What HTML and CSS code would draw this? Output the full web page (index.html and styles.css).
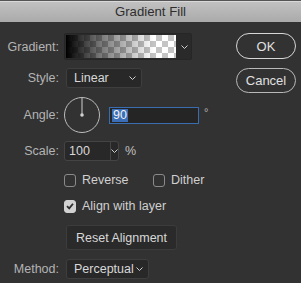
FILE: index.html
```html
<!DOCTYPE html>
<html lang="en">
<head>
    <meta charset="UTF-8">
    <title>Gradient Fill</title>
    <link rel="stylesheet" href="styles.css">
</head>
<body>
    <div class="dialog">
        <div class="titlebar">Gradient Fill</div>

        <div class="content">
            <!-- Left: fill options -->
            <div class="form">
                <div class="row row-gradient">
                    <span class="label">Gradient:</span>
                    <div class="swatch">
                        <div class="swatch-preview"></div>
                        <div class="swatch-arrow">
                            <svg width="7" height="4" viewBox="0 0 7 4"><polyline points="0.5,0.5 3.5,3.5 6.5,0.5" fill="none" stroke="#cfcfcf" stroke-width="1"/></svg>
                        </div>
                    </div>
                </div>

                <div class="row row-style">
                    <span class="label">Style:</span>
                    <div class="select select-style">
                        <span>Linear</span>
                        <svg width="7" height="4" viewBox="0 0 7 4"><polyline points="0.5,0.5 3.5,3.5 6.5,0.5" fill="none" stroke="#cfcfcf" stroke-width="1"/></svg>
                    </div>
                </div>

                <div class="row row-angle">
                    <span class="label">Angle:</span>
                    <div class="angle-group">
                        <svg class="dial" width="36" height="36" viewBox="0 0 36 36">
                            <circle cx="18" cy="18" r="17.5" fill="none" stroke="#bcbcbc" stroke-width="1"/>
                            <line x1="18" y1="1" x2="18" y2="18" stroke="#cfcfcf" stroke-width="1"/>
                            <circle cx="18" cy="18" r="1.8" fill="#d0d0d0"/>
                        </svg>
                        <div class="angle-input"><span class="selected">90</span></div>
                        <span class="unit">°</span>
                    </div>
                </div>

                <div class="row row-scale">
                    <span class="label">Scale:</span>
                    <div class="scale-group">
                        <div class="combo">
                            <span class="combo-value">100</span>
                            <span class="combo-arrow">
                                <svg width="7" height="4" viewBox="0 0 7 4"><polyline points="0.5,0.5 3.5,3.5 6.5,0.5" fill="none" stroke="#cfcfcf" stroke-width="1"/></svg>
                            </span>
                        </div>
                        <span class="unit-pct">%</span>
                    </div>
                </div>

                <div class="row row-check">
                    <span></span>
                    <div class="check-group">
                        <div class="check check-first"><span class="box"></span>Reverse</div>
                        <div class="check"><span class="box"></span>Dither</div>
                    </div>
                </div>

                <div class="row row-check row-align">
                    <span></span>
                    <div class="check">
                        <span class="box checked">
                            <svg width="10" height="10" viewBox="0 0 10 10"><polyline points="2,5.2 4.2,7.4 8,2.8" fill="none" stroke="#2d2d2d" stroke-width="1.8"/></svg>
                        </span>Align with layer
                    </div>
                </div>

                <div class="row row-reset">
                    <span></span>
                    <button class="plain-btn">Reset Alignment</button>
                </div>

                <div class="row row-method">
                    <span class="label">Method:</span>
                    <div class="select select-method">
                        <span>Perceptual</span>
                        <svg width="7" height="4" viewBox="0 0 7 4"><polyline points="0.5,0.5 3.5,3.5 6.5,0.5" fill="none" stroke="#cfcfcf" stroke-width="1"/></svg>
                    </div>
                </div>
            </div>

            <!-- Right: dialog buttons -->
            <div class="buttons">
                <button class="pill pill-default">OK</button>
                <button class="pill">Cancel</button>
            </div>
        </div>
    </div>
</body>
</html>
```

FILE: styles.css
```css
body {
    margin: 0;
    padding: 0;
    background-color: #323232;
    font-family: "Liberation Sans", Arial, sans-serif;
    font-size: 12.5px;
}

.dialog {
    width: 301px;
    height: 283px;
    background: #323232;
    overflow: hidden;
}

.titlebar {
    height: 21px;
    border-top: 1px solid #555;
    box-shadow: inset 0 1px 0 #d9d9d9;
    background: linear-gradient(#c2c2c2, #aaaaaa);
    color: #2e2e2e;
    font-size: 13.2px;
    line-height: 22px;
    text-align: center;
}

.content {
    display: flex;
    justify-content: space-between;
}

.form {
    display: flex;
    flex-direction: column;
}

.row {
    display: grid;
    grid-template-columns: 59px auto;
    column-gap: 5px;
    align-items: center;
    justify-items: start;
}

.label {
    justify-self: end;
    color: #b4b4b4;
}

/* Gradient swatch */
.row-gradient {
    margin-top: 11px;
    height: 27px;
}

.swatch {
    display: flex;
    width: 126px;
    height: 25px;
    border: 1px solid #262626;
    border-radius: 2px;
    background: #2a2a2a;
}

.swatch-preview {
    width: 110px;
    margin: 1px;
    background:
        linear-gradient(to right, #000 0%, rgba(0, 0, 0, 0.55) 30%, rgba(0, 0, 0, 0) 80%),
        repeating-conic-gradient(#c4c4c4 0 25%, #ffffff 0 50%) 0 0 / 12px 12px;
}

.swatch-arrow {
    flex: 1;
    display: flex;
    align-items: center;
    justify-content: center;
}

/* Selects */
.select {
    display: flex;
    align-items: center;
    justify-content: space-between;
    box-sizing: border-box;
    height: 20px;
    margin-left: 2px;
    padding: 0 5px 0 7px;
    background: #282828;
    border: 1px solid #3e3e3e;
    border-radius: 3px;
    color: #d8d8d8;
}

.row-style {
    margin-top: 8px;
}

.select-style {
    width: 76px;
}

.select-method {
    width: 83px;
}

/* Angle */
.row-angle {
    margin-top: 9px;
    height: 36px;
}

.angle-group {
    display: flex;
    align-items: center;
}

.dial {
    display: block;
}

.angle-input {
    box-sizing: border-box;
    width: 90px;
    height: 17px;
    margin-left: 9px;
    padding: 1px 2px;
    background: #252525;
    border: 1px solid #3a6cb0;
    display: flex;
    align-items: center;
}

.selected {
    background: #3a6fb8;
    color: #f0f0f0;
    line-height: 13px;
    padding: 0 1px;
}

.unit {
    margin-left: 5px;
    margin-top: -6px;
    color: #b4b4b4;
    font-size: 11px;
}

/* Scale */
.row-scale {
    margin-top: 8px;
}

.scale-group {
    display: flex;
    align-items: center;
}

.combo {
    display: flex;
    box-sizing: border-box;
    width: 55px;
    height: 20px;
    background: #282828;
    border: 1px solid #444;
    border-radius: 3px;
}

.combo-value {
    width: 42px;
    padding-left: 4px;
    line-height: 18px;
    color: #d8d8d8;
    border-right: 1px solid #444;
}

.combo-arrow {
    flex: 1;
    display: flex;
    align-items: center;
    justify-content: center;
}

.unit-pct {
    margin-left: 6px;
    color: #c0c0c0;
}

/* Checkboxes */
.row-check {
    margin-top: 12px;
    height: 14px;
}

.row-align {
    margin-top: 12px;
}

.check-group {
    display: flex;
}

.check {
    display: flex;
    align-items: center;
    color: #d0d0d0;
}

.check-first {
    width: 89px;
}

.box {
    box-sizing: border-box;
    width: 12px;
    height: 13px;
    margin-right: 6px;
    border: 1px solid #8a8a8a;
    border-radius: 3px;
    display: flex;
    align-items: center;
    justify-content: center;
}

.box.checked {
    background: #d2d2d2;
    border-color: #d2d2d2;
}

/* Reset button */
.row-reset {
    margin-top: 12px;
}

.plain-btn {
    width: 111px;
    height: 25px;
    margin-left: 2px;
    padding: 0;
    background: #2a2a2a;
    border: 1px solid #3c3c3c;
    border-radius: 3px;
    color: #d8d8d8;
    font-family: inherit;
    font-size: 12.5px;
}

/* Method */
.row-method {
    margin-top: 9px;
}

/* Dialog buttons */
.buttons {
    display: flex;
    flex-direction: column;
    gap: 9px;
    padding-top: 11px;
    padding-right: 5px;
}

.pill {
    width: 60px;
    height: 25px;
    padding: 0;
    background: transparent;
    border: 1px solid #b8b8b8;
    border-radius: 13px;
    color: #e0e0e0;
    font-family: inherit;
    font-size: 13px;
}

.pill-default {
    height: 26px;
    border-color: #d6d6d6;
}
```
